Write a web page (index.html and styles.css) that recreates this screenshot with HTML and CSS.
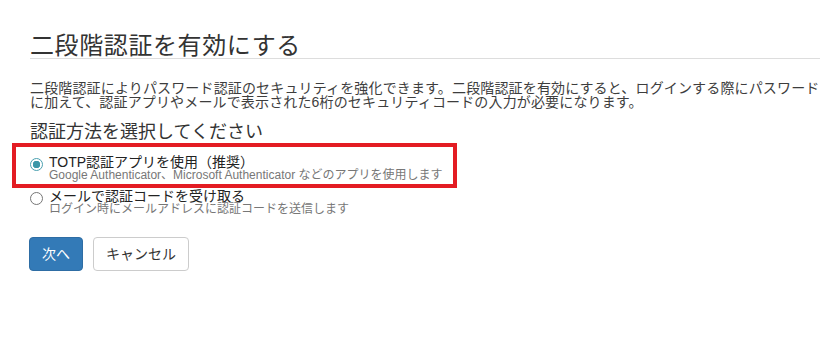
FILE: index.html
```html
<!DOCTYPE html>
<html lang="ja">
<head>
  <meta charset="utf-8">
  <title>二段階認証を有効にする</title>
  <link rel="stylesheet" href="styles.css">
</head>
<body>
  <div class="container">
    <h1 class="page-title">二段階認証を有効にする</h1>
    <p class="lead-text">二段階認証によりパスワード認証のセキュリティを強化できます。二段階認証を有効にすると、ログインする際にパスワードに加えて、認証アプリやメールで表示された6桁のセキュリティコードの入力が必要になります。</p>

    <form class="method-form">
      <h2 class="section-title">認証方法を選択してください</h2>

      <label class="option">
        <input type="radio" name="method" value="totp" checked>
        <span class="option-body">
          <span class="option-label">TOTP認証アプリを使用（推奨）</span>
          <span class="option-desc">Google Authenticator、Microsoft Authenticator などのアプリを使用します</span>
        </span>
        <span class="highlight"></span>
      </label>

      <label class="option">
        <input type="radio" name="method" value="email">
        <span class="option-body">
          <span class="option-label">メールで認証コードを受け取る</span>
          <span class="option-desc">ログイン時にメールアドレスに認証コードを送信します</span>
        </span>
      </label>

      <div class="actions">
        <button type="submit" class="btn btn-primary">次へ</button>
        <button type="button" class="btn btn-default">キャンセル</button>
      </div>
    </form>
  </div>
</body>
</html>
```

FILE: styles.css
```css
  body {
    margin: 0;
    background: #fff;
    color: #333;
    font-family: "Liberation Sans", "Noto Sans CJK JP", sans-serif;
  }

  .container {
    width: 790px;
    padding: 0 15px 0 30px;
  }

  .page-title {
    margin: 34px 0 0;
    padding-bottom: 0;
    font-size: 24px;
    font-weight: normal;
    line-height: 24px;
    letter-spacing: 0.6px;
    border-bottom: 1px solid #ddd;
  }

  .lead-text {
    margin: 22px 0 0;
    font-size: 14px;
    line-height: 14px;
    letter-spacing: 0.15px;
    color: #3d3d3d;
  }

  .method-form {
    margin: 0;
  }

  .section-title {
    margin: 14px 0 0;
    font-size: 18px;
    font-weight: normal;
    line-height: 18px;
  }

  .option {
    position: relative;
    display: flex;
    align-items: flex-start;
    gap: 6px;
    margin-top: 14px;
    cursor: pointer;
  }

  .option + .option {
    margin-top: 7px;
  }

  .option input {
    appearance: none;
    -webkit-appearance: none;
    flex: none;
    width: 13px;
    height: 13px;
    margin: 3px 0 0;
    border: 1px solid #767676;
    border-radius: 50%;
    background: #fff;
    box-sizing: border-box;
  }

  .option input:checked {
    border-color: #4aa0b0;
    background: radial-gradient(circle, #3c97a8 0 3.5px, #fff 4px);
  }

  .option-body {
    display: flex;
    flex-direction: column;
  }

  .option-label {
    font-size: 14px;
    line-height: 14px;
    color: #222;
  }

  .option-desc {
    font-size: 12px;
    line-height: 13px;
    color: #777;
  }

  .highlight {
    position: absolute;
    left: -18px;
    top: -12px;
    width: 445px;
    height: 45px;
    border: 4px solid #e31c23;
    box-sizing: border-box;
    pointer-events: none;
  }

  .actions {
    display: flex;
    gap: 10px;
    margin: 21px 0 0 -1px;
  }

  .btn {
    padding: 6px 12px;
    font-family: inherit;
    font-size: 14px;
    line-height: 20px;
    border: 1px solid transparent;
    border-radius: 4px;
    cursor: pointer;
  }

  .btn-primary {
    color: #fff;
    background: #337ab7;
    border-color: #2e6da4;
  }

  .btn-default {
    color: #333;
    background: #fff;
    border-color: #ccc;
  }
```
